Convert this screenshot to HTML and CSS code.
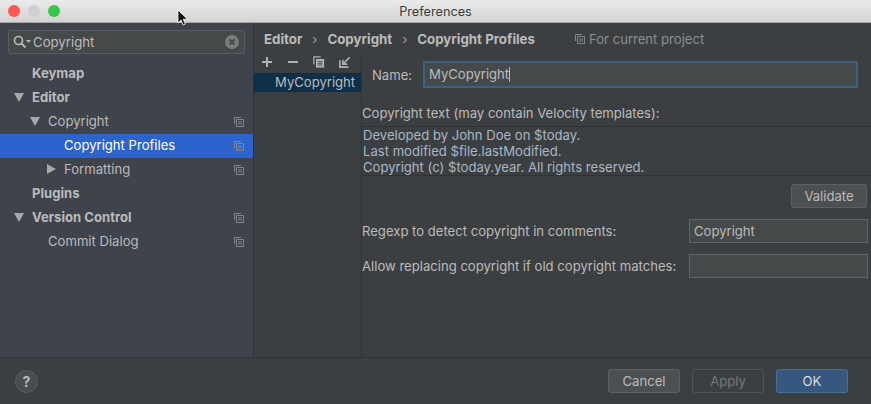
FILE: index.html
```html
<!DOCTYPE html>
<html>
<head>
  <title>Preferences</title>
  <link rel="stylesheet" href="styles.css">
</head>
<body>

  <div class="titlebar">
    <div class="lights">
      <span class="light red"></span>
      <span class="light grey"></span>
      <span class="light green"></span>
    </div>
    <div class="title">Preferences</div>
  </div>

  <div class="main">
    <div class="sidebar">
      <div class="search">
        <svg class="search-icon" width="18" height="14" viewBox="0 0 18 14">
          <circle cx="5.5" cy="5.5" r="4" fill="none" stroke="#b4b6b8" stroke-width="1.7"/>
          <path d="M8.5 8.5l4 4" stroke="#b4b6b8" stroke-width="2" fill="none"/>
          <path d="M13 5h5l-2.5 3z" fill="#b4b6b8"/>
        </svg>
        <span class="search-text">Copyright</span>
        <svg class="search-clear" width="14" height="14" viewBox="0 0 14 14">
          <circle cx="7" cy="7" r="7" fill="#7b7d7f"/>
          <path d="M4.4 4.4l5.2 5.2M9.6 4.4l-5.2 5.2" stroke="#3f4244" stroke-width="1.7"/>
        </svg>
      </div>

      <ul class="tree">
        <li class="row bold"><span class="label lvl0">Keymap</span></li>
        <li class="row bold"><i class="arrow down a0"></i><span class="label lvl0">Editor</span></li>
        <li class="row"><i class="arrow down a1"></i><span class="label lvl1">Copyright</span><svg class="copy" viewBox="0 0 10 10"><use href="#proj"/></svg></li>
        <li class="row selected"><span class="label lvl2">Copyright Profiles</span><svg class="copy" viewBox="0 0 10 10"><use href="#proj"/></svg></li>
        <li class="row"><i class="arrow right a2"></i><span class="label lvl2">Formatting</span><svg class="copy" viewBox="0 0 10 10"><use href="#proj"/></svg></li>
        <li class="row bold"><span class="label lvl0">Plugins</span></li>
        <li class="row bold"><i class="arrow down a0"></i><span class="label lvl0">Version Control</span><svg class="copy" viewBox="0 0 10 10"><use href="#proj"/></svg></li>
        <li class="row"><span class="label lvl1">Commit Dialog</span><svg class="copy" viewBox="0 0 10 10"><use href="#proj"/></svg></li>
      </ul>
    </div>

    <div class="content">
      <div class="crumbs">
        <b>Editor</b><span class="sep">›</span><b>Copyright</b><span class="sep">›</span><b>Copyright Profiles</b>
        <svg class="copy crumb-copy" viewBox="0 0 10 10"><use href="#proj"/></svg>
        <span class="scope">For current project</span>
      </div>

      <div class="split">
        <div class="profiles">
          <div class="tools">
            <svg width="12" height="12" viewBox="0 0 12 12"><path d="M6 1v10M1 6h10" stroke="#afb1b3" stroke-width="2"/></svg>
            <svg width="12" height="12" viewBox="0 0 12 12"><path d="M1 6h10" stroke="#afb1b3" stroke-width="2"/></svg>
            <svg width="12" height="12" viewBox="0 0 14 14">
              <path d="M1 10V1h8" fill="none" stroke="#afb1b3" stroke-width="1.4"/>
              <path d="M3.5 3.5h9.5v10H3.5z" fill="#afb1b3"/>
              <path d="M5.5 6.5h5.5M5.5 8.5h5.5M5.5 10.5h5.5" stroke="#3c3f41" stroke-width="1"/>
            </svg>
            <svg width="12" height="12" viewBox="0 0 14 14">
              <path d="M1 5v8h10" fill="none" stroke="#afb1b3" stroke-width="1.9"/>
              <path d="M12.5 1.5L5 9M4.5 4.5V9.5H9.5" fill="none" stroke="#afb1b3" stroke-width="1.9"/>
            </svg>
          </div>
          <div class="profile">MyCopyright</div>
        </div>

        <div class="form">
          <div class="name-row">
            <label>Name:</label>
            <div class="name-input">MyCopyright<i class="caret"></i></div>
          </div>

          <div class="text-label">Copyright text (may contain Velocity templates):</div>
          <div class="template">
            Developed by John Doe on $today.<br>
            Last modified $file.lastModified.<br>
            Copyright (c) $today.year. All rights reserved.
          </div>

          <div class="validate-row"><button class="btn">Validate</button></div>

          <div class="field-row">
            <label>Regexp to detect copyright in comments:</label>
            <div class="field">Copyright</div>
          </div>
          <div class="field-row">
            <label>Allow replacing copyright if old copyright matches:</label>
            <div class="field"></div>
          </div>
        </div>
      </div>
    </div>
  </div>

  <div class="footer">
    <div class="help">?</div>
    <div class="actions">
      <button class="btn">Cancel</button>
      <button class="btn disabled">Apply</button>
      <button class="btn primary">OK</button>
    </div>
  </div>

  <!-- mouse pointer -->
  <svg class="pointer" width="12" height="18" viewBox="0 0 12 18">
    <path d="M1 1v13l3-3 2.2 5 2.2-1-2.2-4.8H10.5z" fill="#111" stroke="#fff" stroke-width="0.8"/>
  </svg>

  <svg class="defs" width="0" height="0">
    <symbol id="proj" viewBox="0 0 10 10">
      <path d="M.5 7V.5H7" fill="none" stroke="#83878b" stroke-width="1"/>
      <path d="M2.5 2.5h7v7h-7z" fill="none" stroke="#83878b" stroke-width="1"/>
      <path d="M4 5h4M4 7h4" stroke="#83878b" stroke-width="1"/>
    </symbol>
  </svg>

</body>
</html>
```

FILE: styles.css
```css
html, body {
  height: 100%;
}

body {
  font-family: Inter, "Liberation Sans", sans-serif;
  font-size: 13.1px;
  background-color: #3c3f41;
  color: #bbbbbb;
  margin: 0;
  width: 871px;
  height: 404px;
  overflow: hidden;
  display: flex;
  flex-direction: column;
}

label {
  white-space: nowrap;
}

.titlebar {
  height: 22px;
  flex: none;
  display: flex;
  align-items: center;
  justify-content: center;
  background: linear-gradient(#ebebeb, #d4d4d4);
  border-bottom: 1px solid #a8a8a8;
  position: relative;
}

.title {
  color: #3c3c3c;
  font-size: 12.7px;
}

.lights {
  position: absolute;
  left: 8px;
  top: 5px;
  display: flex;
  gap: 8px;
}

.light {
  width: 12px;
  height: 12px;
  border-radius: 50%;
}

.red { background-color: #fc5753; }
.grey { background-color: #cfcfcf; }
.green { background-color: #34c749; }

.main {
  flex: 1;
  display: flex;
  min-height: 0;
  border-bottom: 1px solid #323232;
}

.sidebar {
  width: 253px;
  flex: none;
  background-color: #3e434c;
  border-right: 1px solid #323232;
  padding-top: 7px;
}

.search {
  margin: 0 8px;
  height: 24px;
  box-sizing: border-box;
  display: flex;
  align-items: center;
  background-color: #45494a;
  border: 1px solid #5a5d5f;
  border-radius: 3px;
  padding: 0 5px 0 4px;
}

.search-icon {
  flex: none;
}

.search-text {
  flex: 1;
  margin-left: 2px;
  font-size: 13.2px;
  color: #bbbbbb;
}

.tree {
  list-style-type: none;
  margin: 8px 0 0;
  padding: 0;
}

.row {
  height: 24px;
  box-sizing: border-box;
  padding-bottom: 2px;
  display: flex;
  align-items: center;
  position: relative;
  white-space: nowrap;
}

.bold .label {
  font-weight: 700;
}

.lvl0 { margin-left: 32px; }
.lvl1 { margin-left: 48px; }
.lvl2 { margin-left: 64px; }

.selected {
  background-color: #2d63cc;
  color: #fff;
}

.arrow {
  position: absolute;
  width: 0;
  height: 0;
}

.arrow.down {
  border-left: 5px solid transparent;
  border-right: 5px solid transparent;
  border-top: 9px solid #a6a8aa;
}

.arrow.right {
  border-top: 5px solid transparent;
  border-bottom: 5px solid transparent;
  border-left: 9px solid #a6a8aa;
}

.a0 { left: 14px; }
.a1 { left: 30px; }
.a2 { left: 47px; }

.copy {
  width: 10px;
  height: 10px;
  position: absolute;
  left: 234px;
  top: 7px;
}

.crumbs {
  height: 31px;
  display: flex;
  align-items: center;
  padding-left: 10px;
  font-size: 13.3px;
  white-space: nowrap;
}

.sep {
  width: 25px;
  text-align: center;
  color: #a0a0a0;
}

.crumb-copy {
  position: static;
  margin-left: 40px;
}

.scope {
  margin-left: 4px;
  font-size: 13.1px;
  color: #8a8d8f;
}

.content {
  flex: 1;
  min-width: 0;
  display: flex;
  flex-direction: column;
}

.split {
  flex: 1;
  display: flex;
}

.profiles {
  width: 107px;
  flex: none;
  border-right: 1px solid #323232;
}

.tools {
  height: 15px;
  display: flex;
  align-items: center;
  gap: 14px;
  padding-left: 7px;
}

.profile {
  height: 19px;
  line-height: 19px;
  background-color: #0d2f49;
  padding-left: 21px;
  margin-top: 4px;
}

.form {
  flex: 1;
  min-width: 0;
}

.name-row {
  display: flex;
  align-items: center;
  margin-top: 7px;
  padding-left: 10px;
}

.name-row label {
  width: 51px;
}

.name-input {
  width: 435px;
  height: 27px;
  box-sizing: border-box;
  padding-left: 4px;
  background-color: #45494a;
  border: 2px solid #3d6185;
  line-height: 23px;
}

.caret {
  display: inline-block;
  width: 1px;
  height: 15px;
  vertical-align: -3px;
  background-color: #bbbbbb;
}

.text-label {
  margin-top: 17px;
  line-height: 17px;
}

.template {
  margin-top: 4px;
  height: 50px;
  box-sizing: border-box;
  border-top: 1px solid #323232;
  border-bottom: 1px solid #323232;
  padding-left: 1px;
  line-height: 16px;
  color: #a9b7c6;
}

.validate-row {
  display: flex;
  justify-content: flex-end;
  margin-top: 8px;
  padding-right: 4px;
}

.btn {
  font-family: inherit;
  font-size: 13.1px;
  width: 76px;
  height: 24px;
  padding: 0;
  color: #bbbbbb;
  background-color: #4c5052;
  border: 1px solid #5e6060;
  border-radius: 3px;
}

.field-row {
  display: flex;
  align-items: center;
  justify-content: space-between;
  padding-right: 3px;
  margin-top: 11px;
}

.field {
  width: 179px;
  flex: none;
  height: 24px;
  box-sizing: border-box;
  line-height: 22px;
  padding-left: 4px;
  background-color: #45494a;
  border: 1px solid #646464;
}

.footer {
  height: 46px;
  flex: none;
  display: flex;
  align-items: center;
  justify-content: space-between;
  padding: 0 23px 0 15px;
}

.help {
  width: 23px;
  height: 23px;
  box-sizing: border-box;
  border-radius: 50%;
  border: 1px solid #5a5d5f;
  background-color: #4a4d4f;
  text-align: center;
  line-height: 21px;
  font-size: 14px;
  font-weight: 700;
}

.actions {
  display: flex;
  gap: 12px;
}

.actions .btn {
  width: 72px;
}

.btn.disabled {
  background-color: transparent;
  color: #777777;
  border-color: #555555;
}

.btn.primary {
  background-color: #365880;
  border-color: #4c708c;
  color: #dddddd;
}

.pointer {
  position: absolute;
  left: 177px;
  top: 9px;
}

.defs {
  position: absolute;
}
```
